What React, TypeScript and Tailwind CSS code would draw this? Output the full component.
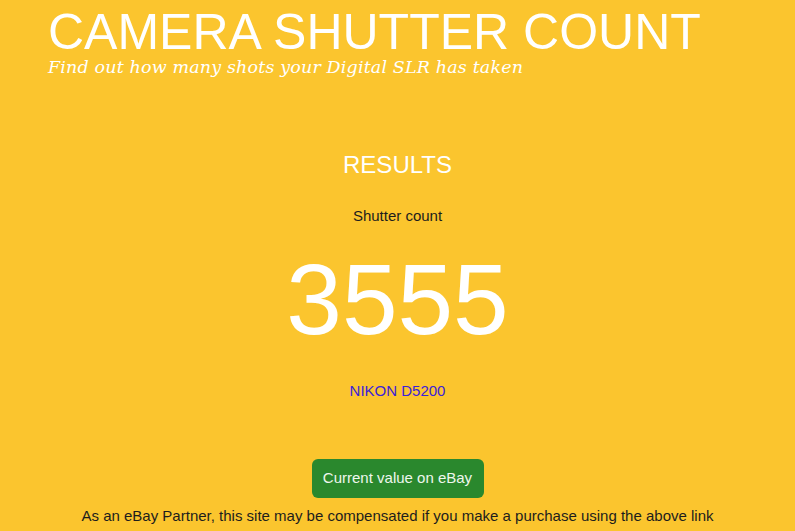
import React from 'react';

export default function App() {
  return (
    <div className="min-h-[531px] w-full bg-[#fbc52e] text-[#222] font-['Liberation_Sans',Arial,sans-serif]">
      {/* Header */}
      <header className="pl-[48px] pt-[7px]">
        <h1 className="text-[50px] leading-[50px] text-white">CAMERA SHUTTER COUNT</h1>
        <p className="text-[17.5px] leading-[20px] italic text-white tracking-[0.15px] font-['DejaVu_Serif',Georgia,serif]">
          Find out how many shots your Digital SLR has taken
        </p>
      </header>

      {/* Results */}
      <main className="flex flex-col items-center pt-[74px]">
        <h2 className="text-[24px] leading-[28px] text-white">RESULTS</h2>
        <p className="mt-[28px] text-[15px] leading-[18px] text-[#1d1d1d]">Shutter count</p>
        <div className="mt-[14px] text-[100px] leading-[120px] text-white">3555</div>
        <a href="#" className="mt-[23px] text-[15px] leading-[18px] text-[#3b22d8]">NIKON D5200</a>
        <a
          href="#"
          className="mt-[59px] w-[172px] h-[39px] flex items-center justify-center rounded-[6px] bg-[#2a882d] text-[15px] text-[#eef7ee]"
        >
          Current value on eBay
        </a>
        <p className="mt-[9px] text-[15px] leading-[18px] text-[#1d1d1d]">
          As an eBay Partner, this site may be compensated if you make a purchase using the above link
        </p>
      </main>
    </div>
  );
}
